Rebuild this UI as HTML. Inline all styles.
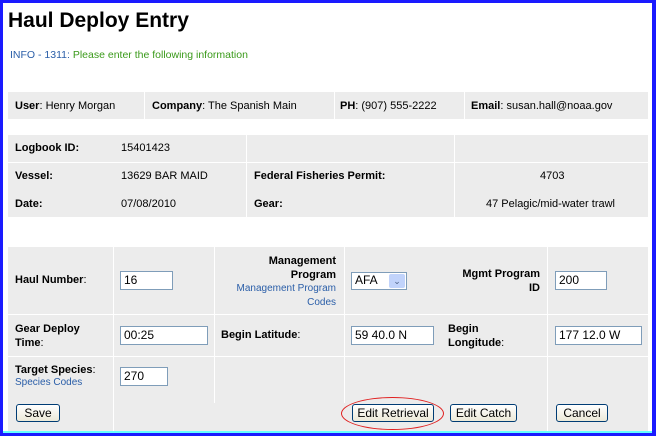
<!DOCTYPE html>
<html><head><style>
*{margin:0;padding:0;box-sizing:border-box}
body{width:656px;height:436px;background:#fff;position:relative;overflow:hidden;font-family:"Liberation Sans",Arial,sans-serif;font-size:11px;color:#000}
.a{position:absolute}
.g{position:absolute;background:#ececec}
.b{font-weight:bold}
.vl{position:absolute;width:1px;background:#fff}
.hl{position:absolute;height:1px;background:#fff}
.in{position:absolute;background:#fff;border:1px solid #7f9db9;padding:1px 3px;font-size:12px;line-height:14px}
.bt{position:absolute;border:1px solid #003c74;border-radius:3px;background:linear-gradient(#fff,#ece9d8);font-size:12px;text-align:center;line-height:16px}
.lk{color:#2a5ea8;font-size:10px}
</style></head><body>
<div class="a" style="left:0;top:0;width:656px;height:436px;border:3px solid #1a1aff;border-right:4px solid #1a1aff;border-bottom:4px solid #1a1aff"></div>
<div class="a" style="left:3px;top:431px;width:649px;height:2px;background:#6ff"></div>
<div class="a b" style="left:8px;top:9px;font-size:21px">Haul Deploy Entry</div>
<div class="a" style="left:10px;top:49px;font-size:10.5px"><span style="color:#2a5ea8">INFO - 1311:</span> <span style="color:#3a9a1a">Please enter the following information</span></div>

<div class="g" style="left:8px;top:92px;width:640px;height:27px"></div>
<div class="vl" style="left:144px;top:92px;height:27px"></div>
<div class="vl" style="left:334px;top:92px;height:27px"></div>
<div class="vl" style="left:464px;top:92px;height:27px"></div>
<div class="a" style="left:15px;top:100px"><b>User</b>: Henry Morgan</div>
<div class="a" style="left:152px;top:100px"><b>Company</b>: The Spanish Main</div>
<div class="a" style="left:340px;top:100px"><b>PH</b>: (907) 555-2222</div>
<div class="a" style="left:471px;top:100px"><b>Email</b>: susan.hall@noaa.gov</div>

<div class="g" style="left:8px;top:135px;width:640px;height:82px"></div>
<div class="hl" style="left:8px;top:162px;width:640px"></div>
<div class="vl" style="left:246px;top:135px;height:82px"></div>
<div class="vl" style="left:454px;top:135px;height:82px"></div>
<div class="a b" style="left:15px;top:142px">Logbook ID:</div><div class="a" style="left:121px;top:142px">15401423</div>
<div class="a b" style="left:15px;top:170px">Vessel:</div><div class="a" style="left:121px;top:170px">13629 BAR MAID</div>
<div class="a b" style="left:254px;top:170px">Federal Fisheries Permit:</div><div class="a" style="left:540px;top:170px">4703</div>
<div class="a b" style="left:15px;top:198px">Date:</div><div class="a" style="left:121px;top:198px">07/08/2010</div>
<div class="a b" style="left:254px;top:198px">Gear:</div><div class="a" style="left:486px;top:198px">47 Pelagic/mid-water trawl</div>

<div class="g" style="left:8px;top:247px;width:640px;height:184px"></div>
<div class="vl" style="left:113px;top:247px;height:184px"></div>
<div class="vl" style="left:214px;top:247px;height:156px"></div>
<div class="vl" style="left:344px;top:247px;height:156px"></div>
<div class="vl" style="left:547px;top:247px;height:184px"></div>
<div class="hl" style="left:8px;top:314px;width:640px"></div>
<div class="hl" style="left:8px;top:356px;width:640px"></div>

<div class="a" style="left:15px;top:274px"><b>Haul Number</b>:</div>
<div class="in" style="left:120px;top:271px;width:53px;height:19px">16</div>
<div class="a b" style="left:220px;top:254px;width:116px;text-align:right;line-height:14px">Management<br>Program</div>
<div class="a lk" style="left:220px;top:282px;width:116px;text-align:right;line-height:14px">Management Program<br>Codes</div>
<div class="in" style="left:351px;top:272px;width:56px;height:18px;padding:0 3px">AFA<span class="a" style="right:1px;top:1px;width:16px;height:14px;background:#c1d3fb;border-radius:2px;color:#4d6185;font-size:9px;text-align:center;line-height:14px">&#8964;</span></div>
<div class="a b" style="left:440px;top:267px;width:100px;text-align:right;line-height:14px">Mgmt Program<br>ID</div>
<div class="in" style="left:555px;top:271px;width:52px;height:19px">200</div>

<div class="a b" style="left:15px;top:322px;line-height:14px">Gear Deploy<br>Time<span style="font-weight:normal">:</span></div>
<div class="in" style="left:120px;top:326px;width:88px;height:19px">00:25</div>
<div class="a" style="left:221px;top:329px"><b>Begin Latitude</b>:</div>
<div class="in" style="left:351px;top:326px;width:83px;height:19px">59 40.0 N</div>
<div class="a b" style="left:448px;top:322px;line-height:14px">Begin<br>Longitude<span style="font-weight:normal">:</span></div>
<div class="in" style="left:555px;top:326px;width:87px;height:19px">177 12.0 W</div>

<div class="a" style="left:15px;top:364px"><b>Target Species</b>:</div>
<div class="a lk" style="left:15px;top:377px">Species Codes</div>
<div class="in" style="left:120px;top:367px;width:48px;height:19px">270</div>

<div class="bt" style="left:16px;top:404px;width:44px;height:18px">Save</div>
<div class="bt" style="left:352px;top:404px;width:82px;height:18px">Edit Retrieval</div>
<div class="bt" style="left:450px;top:404px;width:67px;height:18px">Edit Catch</div>
<div class="bt" style="left:556px;top:404px;width:52px;height:18px">Cancel</div>
<div class="a" style="left:341px;top:397px;width:103px;height:33px;border:1.5px solid #e02020;border-radius:50%"></div>
</body></html>
